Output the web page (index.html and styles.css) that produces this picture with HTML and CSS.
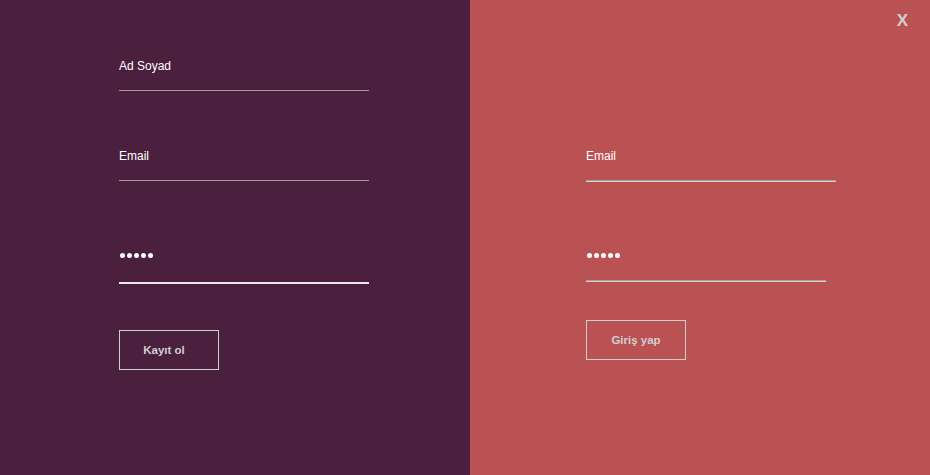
FILE: index.html
```html
<!DOCTYPE html>
<html lang="tr">
<head>
<meta charset="utf-8">
<title>Kayıt / Giriş</title>
<link rel="stylesheet" href="styles.css">
</head>
<body>
<div class="page">
  <section class="panel panel-register">
    <div class="field field-text f-name"><span class="label">Ad Soyad</span></div>
    <div class="field field-text f-mail"><span class="label">Email</span></div>
    <div class="field field-pass f-pass-l"><span class="dots"><i></i><i></i><i></i><i></i><i></i></span></div>
    <button class="btn btn-register">Kayıt ol</button>
  </section>
  <section class="panel panel-login">
    <div class="field field-text f-mail-r"><span class="label">Email</span></div>
    <div class="field field-pass f-pass-r"><span class="dots"><i></i><i></i><i></i><i></i><i></i></span></div>
    <button class="btn btn-login">Giriş yap</button>
    <span class="close">X</span>
  </section>
</div>
</body>
</html>
```
FILE: styles.css
```css
* { box-sizing: border-box; }
html, body { margin: 0; padding: 0; }
body {
  font-family: "Liberation Sans", Arial, sans-serif;
  font-size: 12px;
  width: 930px;
  height: 475px;
  overflow: hidden;
}
.page {
  display: grid;
  grid-template-columns: 470px 460px;
  height: 475px;
}
.panel {
  display: flex;
  flex-direction: column;
  align-items: flex-start;
  position: relative;
}
.panel-register {
  background: #4a203e;
  padding: 59px 0 0 119px;
}
.panel-login {
  background: #ba5254;
  padding: 149px 0 0 116px;
}
.field {
  width: 250px;
  line-height: 14px;
  color: #ffffff;
}
.label { display: block; height: 14px; }
.f-name {
  padding-bottom: 17px;
  border-bottom: 1px solid #a09aa0;
}
.f-mail {
  margin-top: 58px;
  padding-bottom: 17px;
  border-bottom: 1px solid #a09aa0;
}
.f-pass-l {
  margin-top: 72px;
  height: 31px;
  border-bottom: 2px solid #ece8ec;
}
.f-mail-r {
  padding-bottom: 17px;
  border-bottom: 1px solid #a8a0a0;
  box-shadow: 0 1px 0 #d2d0d0;
}
.f-pass-r {
  width: 240px;
  margin-top: 72px;
  height: 28px;
  border-bottom: 1px solid #a8a0a0;
  box-shadow: 0 1px 0 #d2d0d0;
}
.dots {
  display: flex;
  gap: 2px;
  padding-left: 1px;
}
.dots i {
  display: block;
  width: 5px;
  height: 5px;
  border-radius: 50%;
  background: #ffffff;
}
.btn {
  width: 100px;
  height: 40px;
  background: transparent;
  border: 1px solid #cfcfcf;
  color: #cfcfcf;
  font-family: "Liberation Sans", Arial, sans-serif;
  font-size: 11.5px;
  font-weight: bold;
  padding: 0 10px 0 0;
  cursor: pointer;
}
.btn-register { margin-top: 46px; }
.btn-login { margin-top: 39px; padding: 0; }
.close {
  position: absolute;
  top: 11px;
  right: 22px;
  color: #d0d0d0;
  font-size: 17px;
  font-weight: bold;
  line-height: 20px;
}
```
